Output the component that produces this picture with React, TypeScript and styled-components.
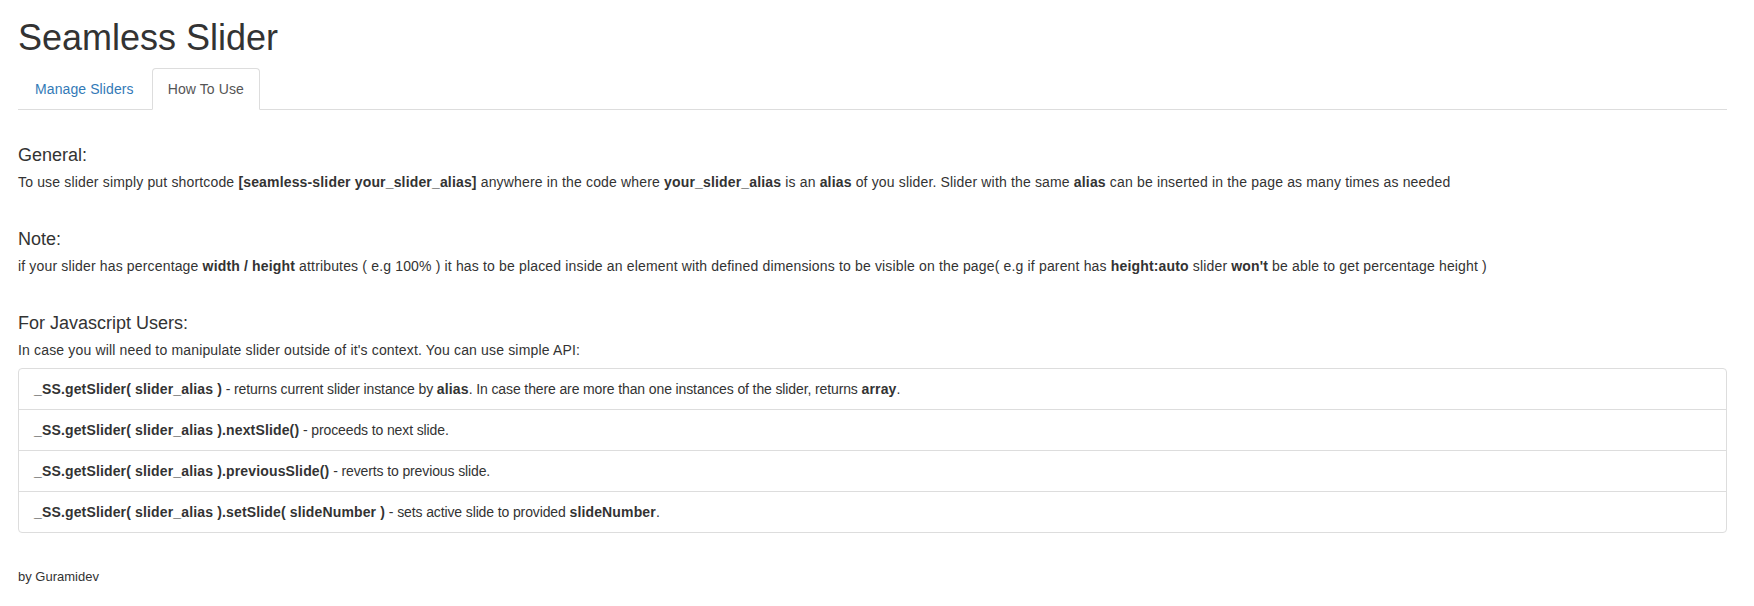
import React from "react"
import styled, { createGlobalStyle } from "styled-components"

const GlobalStyle = createGlobalStyle`
    html, body {
        margin: 0;
        padding: 0;
        background: #fff;
    }
    body {
        font-family: "Liberation Sans", Arial, Helvetica, sans-serif;
        font-size: 14px;
        line-height: 20px;
        color: #333;
    }
`

const sections = [
    {
        title: "General:",
        body: (
            <>
                To use slider simply put shortcode{" "}
                <b>[seamless-slider your_slider_alias]</b> anywhere in the code
                where <b>your_slider_alias</b> is an <b>alias</b> of you slider.
                Slider with the same <b>alias</b> can be inserted in the page as
                many times as needed
            </>
        ),
    },
    {
        title: "Note:",
        body: (
            <>
                if your slider has percentage <b>width / height</b> attributes (
                e.g 100% ) it has to be placed inside an element with defined
                dimensions to be visible on the page( e.g if parent has{" "}
                <b>height:auto</b> slider <b>won't</b> be able to get percentage
                height )
            </>
        ),
    },
    {
        title: "For Javascript Users:",
        body: (
            <>
                In case you will need to manipulate slider outside of it's
                context. You can use simple API:
            </>
        ),
    },
]

const apiItems = [
    {
        call: "_SS.getSlider( slider_alias )",
        text: (
            <>
                {" "}
                - returns current slider instance by <b>alias</b>. In case there
                are more than one instances of the slider, returns <b>array</b>.
            </>
        ),
    },
    {
        call: "_SS.getSlider( slider_alias ).nextSlide()",
        text: <> - proceeds to next slide.</>,
    },
    {
        call: "_SS.getSlider( slider_alias ).previousSlide()",
        text: <> - reverts to previous slide.</>,
    },
    {
        call: "_SS.getSlider( slider_alias ).setSlide( slideNumber )",
        text: (
            <>
                {" "}
                - sets active slide to provided <b>slideNumber</b>.
            </>
        ),
    },
]

export default () => {
    return (
        <>
            <GlobalStyle />
            <Page>
                <Title>Seamless Slider</Title>
                <TabBar>
                    <Tab>Manage Sliders</Tab>
                    <Tab active>How To Use</Tab>
                </TabBar>
                <Content>
                    {sections.map(section => (
                        <Section key={section.title}>
                            <Heading>{section.title}</Heading>
                            <Text>{section.body}</Text>
                        </Section>
                    ))}
                    <ApiList>
                        {apiItems.map(item => (
                            <ApiItem key={item.call}>
                                <b>{item.call}</b>
                                {item.text}
                            </ApiItem>
                        ))}
                    </ApiList>
                </Content>
                <Footer>by Guramidev</Footer>
            </Page>
        </>
    )
}

const Page = styled.div`
    padding: 18px 27px 0 18px;
`

const Title = styled.h1`
    margin: 0 0 10px;
    font-size: 36px;
    font-weight: 400;
    line-height: 40px;
    color: #333;
`

const TabBar = styled.ul`
    display: flex;
    margin: 0;
    padding: 0 0 0 1px;
    list-style: none;
    border-bottom: 1px solid #ddd;
`

const Tab = styled.li<{ active?: boolean }>`
    margin: 0 2px -1px 0;
    padding: 10px 15px;
    line-height: 20px;
    letter-spacing: 0.1px;
    border: 1px solid transparent;
    border-radius: 4px 4px 0 0;
    cursor: pointer;
    color: ${props => (props.active ? "#555" : "#337ab7")};
    ${props =>
        props.active &&
        `
        background: #fff;
        border-color: #ddd #ddd transparent;
    `}
`

const Content = styled.div`
    display: flex;
    flex-direction: column;
    padding-top: 35px;
`

const Section = styled.section`
    margin-bottom: 37px;

    &:last-of-type {
        margin-bottom: 8px;
    }
`

const Heading = styled.h4`
    margin: 0 0 7px;
    font-size: 18px;
    font-weight: 400;
    line-height: 20px;
    color: #333;
`

const Text = styled.p`
    margin: 0;
    letter-spacing: 0.16px;

    b {
        font-weight: 700;
    }
`

const ApiList = styled.ul`
    margin: 0;
    padding: 0;
    list-style: none;
    border: 1px solid #ddd;
    border-radius: 4px;
`

const ApiItem = styled.li`
    padding: 10px 15px;
    line-height: 20px;
    letter-spacing: -0.12px;

    b {
        font-weight: 700;
        letter-spacing: 0.15px;
    }

    & + & {
        border-top: 1px solid #ddd;
    }
`

const Footer = styled.div`
    margin-top: 34px;
    font-size: 13px;
    line-height: 20px;
`
